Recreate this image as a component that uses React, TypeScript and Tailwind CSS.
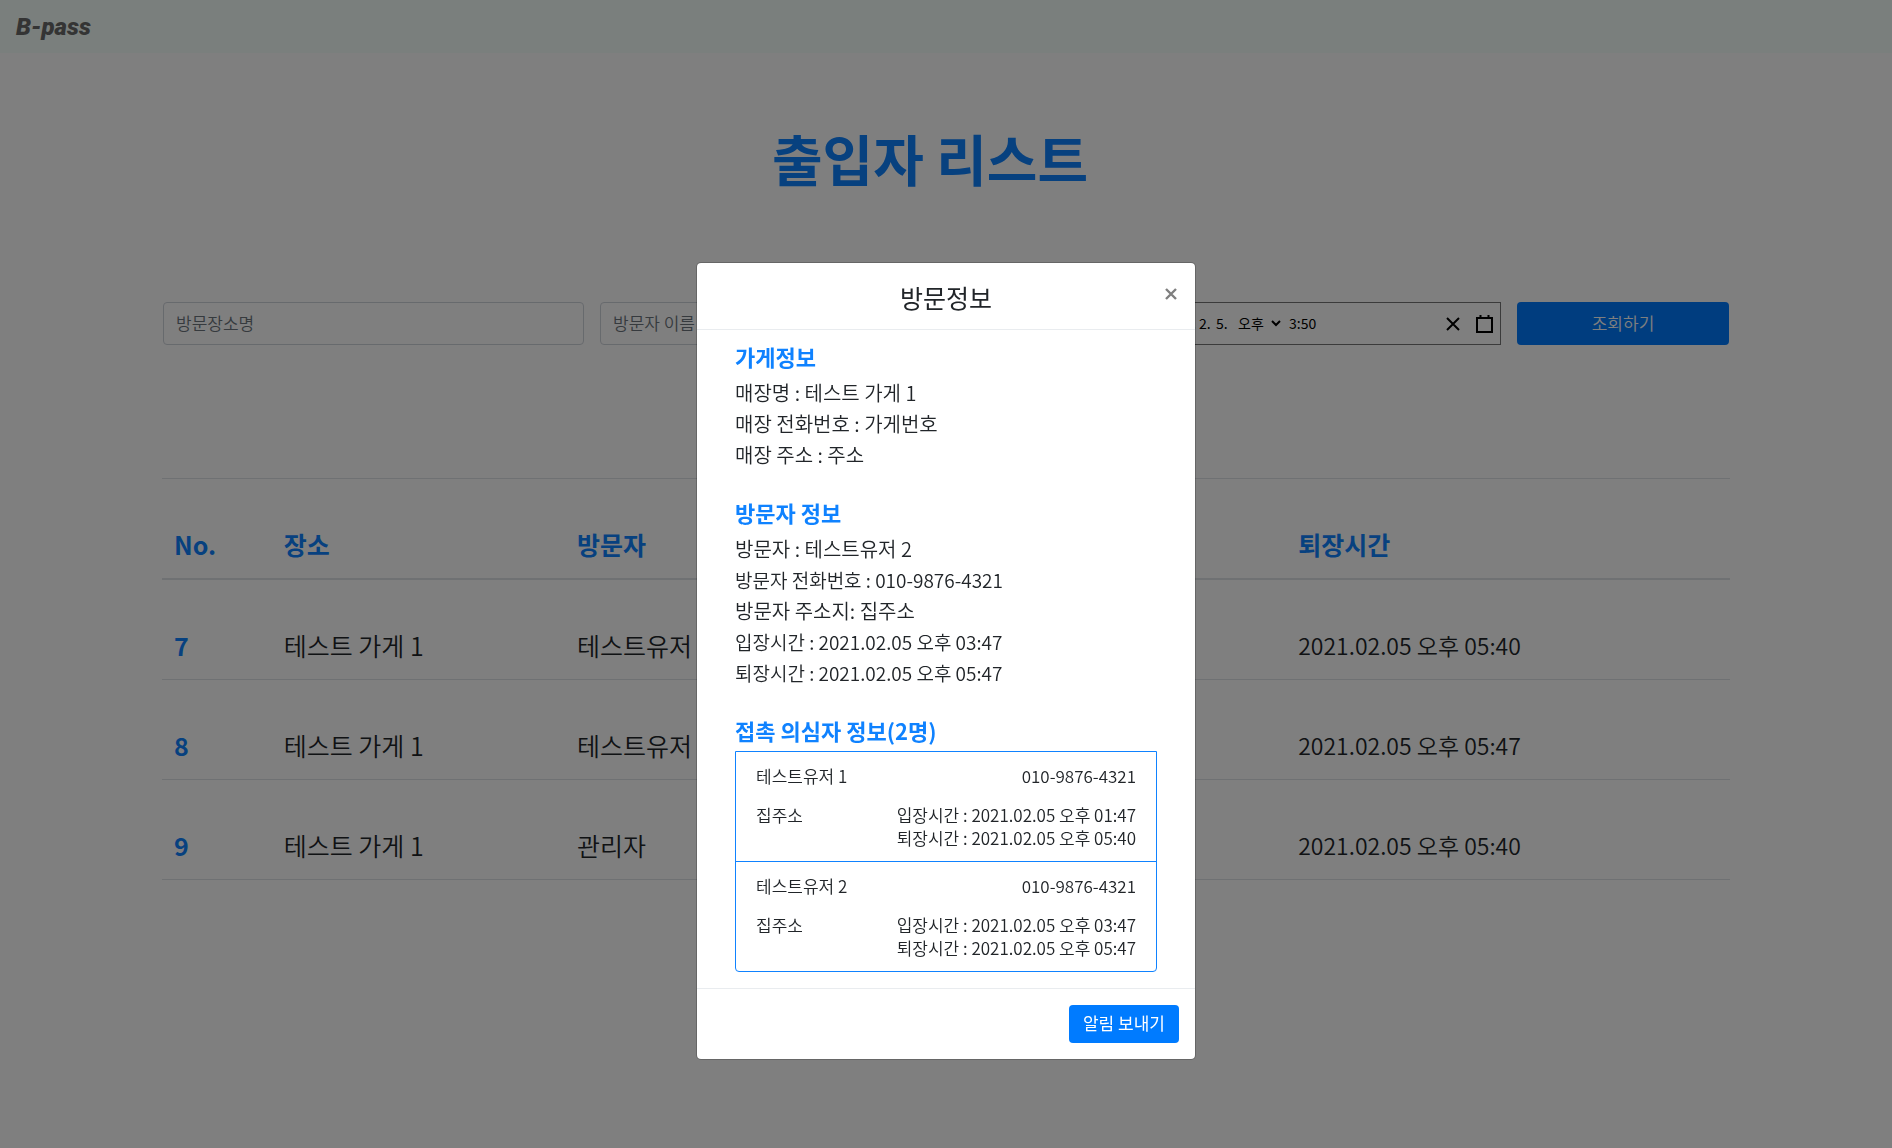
import type { ReactNode } from "react";

const rows = [
  { no: 7, place: "테스트 가게 1", visitor: "테스트유저 1", enter: "2021.02.05 오후 01:47", leave: "2021.02.05 오후 05:40" },
  { no: 8, place: "테스트 가게 1", visitor: "테스트유저 2", enter: "2021.02.05 오후 03:47", leave: "2021.02.05 오후 05:47" },
  { no: 9, place: "테스트 가게 1", visitor: "관리자", enter: "2021.02.05 오후 03:40", leave: "2021.02.05 오후 05:40" },
];

const contacts = [
  { name: "테스트유저 1", phone: "010-9876-4321", address: "집주소", enter: "2021.02.05 오후 01:47", leave: "2021.02.05 오후 05:40" },
  { name: "테스트유저 2", phone: "010-9876-4321", address: "집주소", enter: "2021.02.05 오후 03:47", leave: "2021.02.05 오후 05:47" },
];

function SectionTitle({ children }: { children: ReactNode }) {
  return <h3 className="mb-1.5 text-[22px] leading-[29px] font-bold text-[#0f82ff]">{children}</h3>;
}

function Page() {
  return (
    <div className="min-h-screen bg-white">
      <nav className="flex h-[53px] items-center bg-[#f5fffa] px-4">
        <a href="#" className="font-['Roboto'] text-2xl font-black text-[#696969] italic">
          B-pass
        </a>
      </nav>
      <main className="px-[162px]">
        <h1 className="pt-16 pr-8 text-center text-[55px] leading-[80px] font-bold text-[#0f82ff]">
          출입자 리스트
        </h1>
        <form className="mt-[105px] grid grid-cols-[421fr_421fr_464fr_212fr] gap-4 px-px text-[17px]">
          <input
            aria-label="방문장소명"
            placeholder="방문장소명"
            className="h-[43px] min-w-0 rounded border border-[#ced4da] px-3 pb-0.5 font-[350] placeholder:text-[#6c757d]"
          />
          <input
            aria-label="방문자 이름"
            placeholder="방문자 이름"
            className="h-[43px] min-w-0 rounded border border-[#ced4da] px-3 pb-0.5 font-[350] placeholder:text-[#6c757d]"
          />
          <div className="ml-auto flex h-[43px] w-3/4 items-center border border-[#767676] px-[7px] text-sm text-black">
            <input aria-label="년" defaultValue="2021." className="w-[38px] pb-0.5" />
            <input aria-label="월" defaultValue="2." className="w-[17px] pb-0.5" />
            <input aria-label="일" defaultValue="5." className="w-[14px] pb-0.5" />
            <div className="relative ml-2 flex items-center">
              <select aria-label="오전 오후" defaultValue="오후" className="w-[43px] appearance-none pb-0.5">
                <option>오전</option>
                <option>오후</option>
              </select>
              <svg
                viewBox="0 0 10 7"
                className="pointer-events-none absolute right-0 h-[7px] w-[10px]"
                fill="none"
                stroke="black"
                strokeWidth="2"
              >
                <path d="M1 1l4 4 4-4" />
              </svg>
            </div>
            <input aria-label="시간" defaultValue="3:50" className="ml-2 w-[40px] pb-0.5" />
            <button type="button" aria-label="지우기" className="ml-auto">
              <svg viewBox="0 0 14 14" className="size-[14px]" fill="none" stroke="black" strokeWidth="2">
                <path d="M1 1l12 12M13 1L1 13" />
              </svg>
            </button>
            <button type="button" aria-label="달력 열기" className="ml-4">
              <svg viewBox="0 0 17 18" className="h-[18px] w-[17px]" fill="none" stroke="black" strokeWidth="2">
                <path d="M1 3h15v14H1zM4.500 0v3M12.500 0v3" />
              </svg>
            </button>
          </div>
          <button type="button" className="rounded bg-[#007bff] pb-0.5 font-[350] text-white">
            조회하기
          </button>
        </form>
        <table className="mt-[133px] w-full table-fixed text-left text-[25px] leading-9 font-[350] text-[#212529]">
          <colgroup>
            <col className="w-[7%]" />
            <col className="w-[18.7%]" />
            <col className="w-[23%]" />
            <col className="w-[23%]" />
            <col />
          </colgroup>
          <thead className="text-[#0f82ff]">
            <tr className="border-t border-b-2 border-t-[#dee2e6] border-b-[#dee2e6]">
              {["No.", "장소", "방문자", "입장시간", "퇴장시간"].map((h) => (
                <th key={h} className="px-3 pt-[47px] pb-4 font-bold">
                  {h}
                </th>
              ))}
            </tr>
          </thead>
          <tbody>
            {rows.map((r) => (
              <tr key={r.no} className="border-b border-[#dee2e6]">
                <th className="px-3 pt-[47px] pb-4 font-bold text-[#0f82ff]">{r.no}</th>
                <td className="px-3 pt-[47px] pb-4">{r.place}</td>
                <td className="px-3 pt-[47px] pb-4">{r.visitor}</td>
                <td className="px-3 pt-[47px] pb-4 text-[23px]">{r.enter}</td>
                <td className="px-3 pt-[47px] pb-4 text-[23px]">{r.leave}</td>
              </tr>
            ))}
          </tbody>
        </table>
      </main>
    </div>
  );
}

function Modal() {
  return (
    <div className="fixed inset-0 flex items-start justify-center overflow-auto bg-black/50 pt-[262px]">
      <section
        role="dialog"
        aria-labelledby="visit-title"
        className="w-[500px] rounded-[5px] border border-black/20 bg-white bg-clip-padding font-[350] text-[#212529]"
      >
        <header className="relative flex h-[67px] items-center justify-center border-b border-[#e9ecef] pt-0.5">
          <h2 id="visit-title" className="text-[25px] leading-9 font-normal">
            방문정보
          </h2>
          <button type="button" aria-label="닫기" className="absolute top-[25px] right-[18px]">
            <svg viewBox="0 0 12 12" className="size-3" fill="none" stroke="#7f7f7f" strokeWidth="2.400">
              <path d="M1 1l10 10M11 1L1 11" />
            </svg>
          </button>
        </header>
        <div className="px-[38px] pt-3 pb-4 text-[20px] leading-[31px]">
          <SectionTitle>가게정보</SectionTitle>
          <p>매장명 : 테스트 가게 1</p>
          <p>매장 전화번호 : 가게번호</p>
          <p>매장 주소 : 주소</p>
          <div className="my-7">
            <SectionTitle>방문자 정보</SectionTitle>
            <p>방문자 : 테스트유저 2</p>
            <p className="text-[19px]">방문자 전화번호 : 010-9876-4321</p>
            <p>방문자 주소지: 집주소</p>
            <p className="text-[19px]">입장시간 : 2021.02.05 오후 03:47</p>
            <p className="text-[19px]">퇴장시간 : 2021.02.05 오후 05:47</p>
          </div>
          <SectionTitle>접촉 의심자 정보(2명)</SectionTitle>
          <ul className="divide-y divide-[#0f82ff] rounded-b border border-[#0f82ff] text-[17px] leading-[23px]">
            {contacts.map((c) => (
              <li key={c.name} className="px-5 py-3">
                <div className="flex justify-between">
                  <span>{c.name}</span>
                  <span>{c.phone}</span>
                </div>
                <div className="mt-4 flex justify-between">
                  <span>{c.address}</span>
                  <div>
                    <p>입장시간 : {c.enter}</p>
                    <p>퇴장시간 : {c.leave}</p>
                  </div>
                </div>
              </li>
            ))}
          </ul>
        </div>
        <footer className="flex justify-end border-t border-[#e9ecef] p-4">
          <button type="button" className="h-[38px] rounded bg-[#007bff] px-[14px] pb-0.5 text-[17px] font-normal text-white">
            알림 보내기
          </button>
        </footer>
      </section>
    </div>
  );
}

export default function App() {
  return (
    <div className="font-['Noto_Sans_CJK_KR','Noto_Sans',sans-serif]">
      <Page />
      <Modal />
    </div>
  );
}
